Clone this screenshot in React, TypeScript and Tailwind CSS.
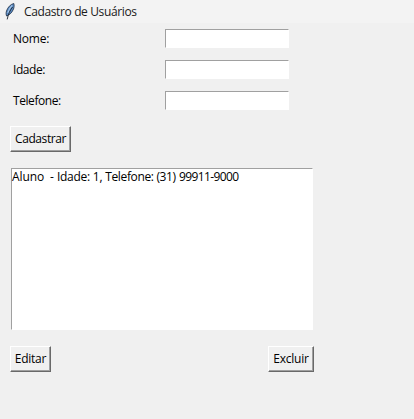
const FONT = "font-['Open_Sans','Noto_Sans',sans-serif]";

function FeatherIcon() {
  return (
    <svg width="12" height="18" viewBox="0 0 12 18" className="mt-[3px] ml-[4px] shrink-0">
      <path d="M9.8 0.5C6.6 1.2 3.6 4.4 2.5 8C1.9 10 2 11.6 2.6 13C5.6 12 8.2 9.4 9.5 6C10.2 4.2 10.3 2.2 9.8 0.5Z" fill="#5b8cc4" stroke="#1d2c42" strokeWidth="0.8" />
      <path d="M8.2 2.4C6.2 4.2 4.6 6.8 3.8 10" fill="none" stroke="#a9c8ea" strokeWidth="1.1" />
      <path d="M8.6 4C6 7.4 4.2 11 3.2 16.4" fill="none" stroke="#1a2230" strokeWidth="0.9" />
    </svg>
  );
}

function Field({ label, spacing }: { label: string; spacing: string }) {
  return (
    <div className="flex h-[31px] items-start">
      <label className={`w-[152px] text-[12px] leading-[20px] ${spacing}`}>{label}</label>
      <input
        aria-label={label}
        className="h-[19px] w-[124px] border border-t-[#a0a0a0] border-r-white border-b-white border-l-[#a0a0a0] bg-white outline-none"
      />
    </div>
  );
}

function Button({ text, size }: { text: string; size: string }) {
  return (
    <button
      className={`flex h-[26px] items-center justify-center border border-t-white border-r-[#696969] border-b-[#696969] border-l-white bg-[#f0f0f0] text-[12px] leading-[16px] whitespace-nowrap shadow-[inset_-1px_-1px_0_#a0a0a0] ${size}`}
    >
      {text}
    </button>
  );
}

export default function App() {
  return (
    <div className={`h-[419px] w-[414px] overflow-hidden bg-[#f0f0f0] text-black ${FONT}`}>
      <header className="flex h-[23px] items-start bg-[#f3f3f3]">
        <FeatherIcon />
        <h1 className="ml-[8px] text-[12px] leading-[24px] tracking-[-0.37px] whitespace-nowrap text-[#1a1a1a]">Cadastro de Usuários</h1>
      </header>
      <main className="pt-[6px]">
        <form className="pl-[13px]">
          <Field label="Nome:" spacing="tracking-[-0.2px]" />
          <Field label="Idade:" spacing="tracking-[-0.45px]" />
          <Field label="Telefone:" spacing="tracking-[-0.42px]" />
        </form>
        <div className="mt-[4px] pl-[10px]">
          <Button text="Cadastrar" size="w-[61px] tracking-[-0.42px]" />
        </div>
        <div className="mt-[16px] ml-[11px] h-[162px] w-[302px] border border-t-[#a0a0a0] border-r-white border-b-white border-l-[#a0a0a0] bg-white">
          <p className="text-[12px] leading-[16px] whitespace-pre">
            <span className="tracking-[-0.1px]">{"Aluno  - "}</span>
            <span className="tracking-[-0.25px]">{"Idade: 1, "}</span>
            <span className="tracking-[-0.35px]">{"Telefone: "}</span>
            <span className="tracking-[-0.4px]">{"(31)"}</span>
            <span className="tracking-[0.2px]"> </span>
            <span className="tracking-[-0.62px]">99911-9000</span>
          </p>
        </div>
        <div className="mt-[16px] ml-[10px] flex w-[304px] justify-between">
          <Button text="Editar" size="w-[41px] tracking-[-0.25px]" />
          <Button text="Excluir" size="w-[46px] tracking-[-0.2px]" />
        </div>
      </main>
    </div>
  );
}
